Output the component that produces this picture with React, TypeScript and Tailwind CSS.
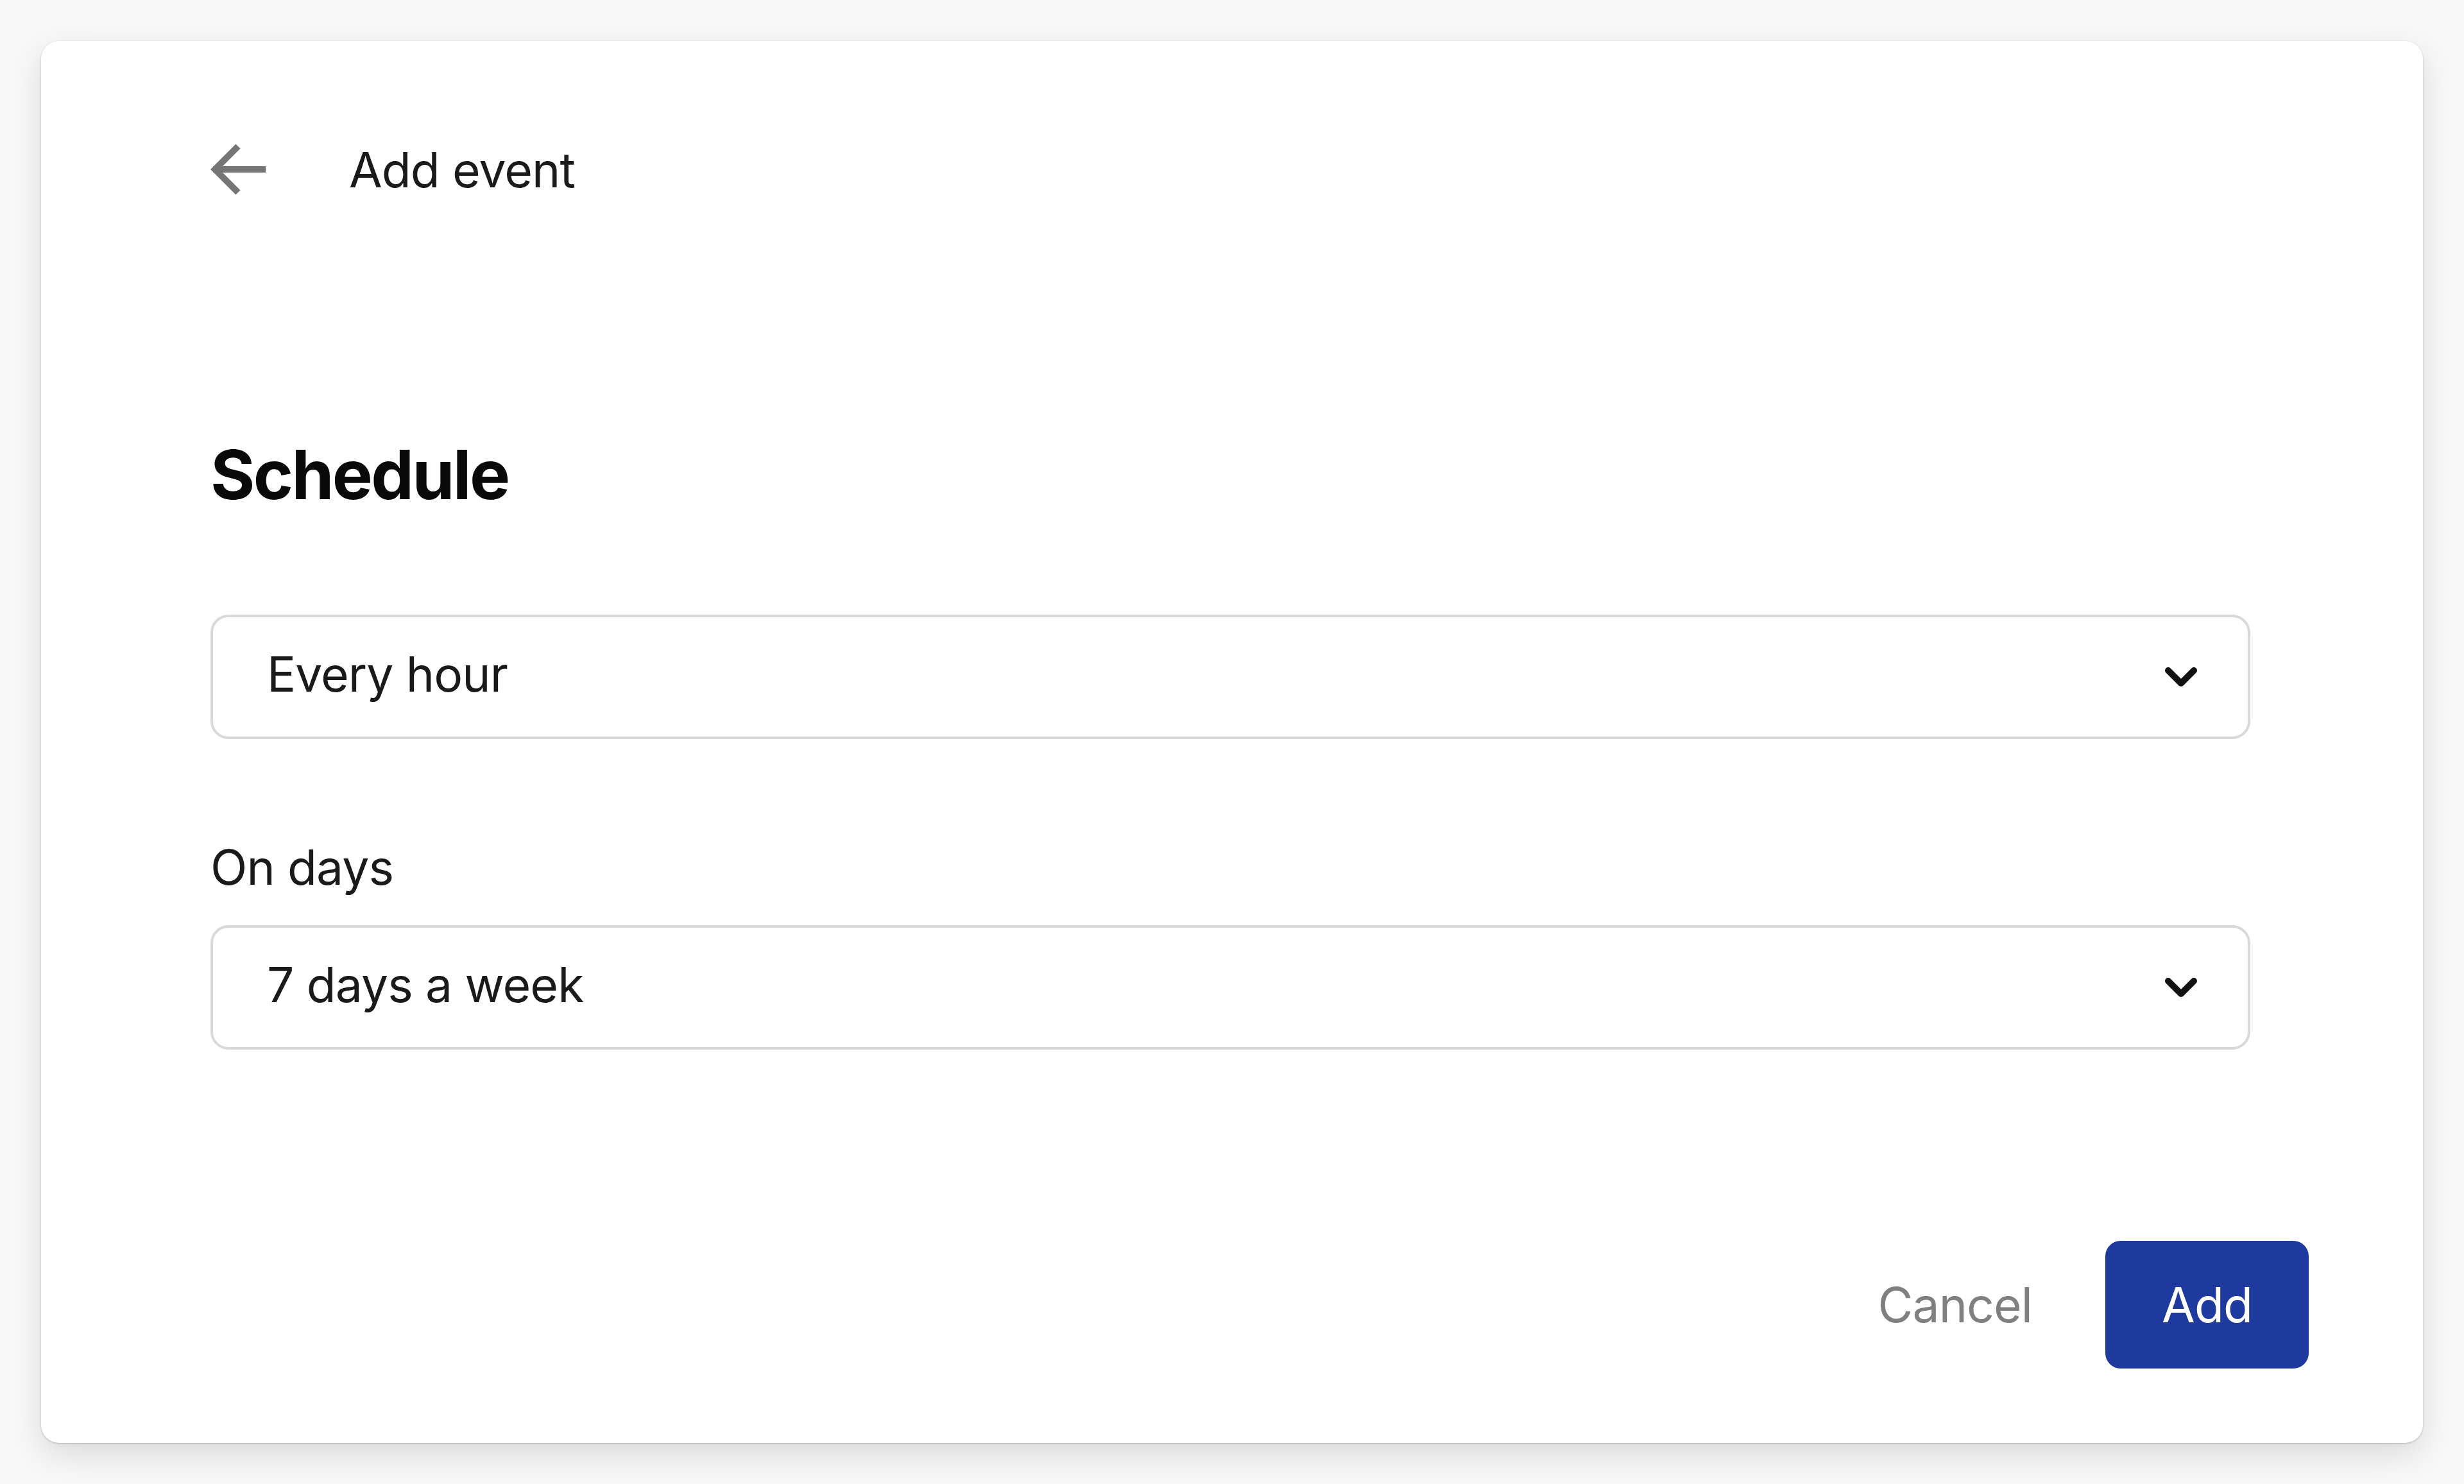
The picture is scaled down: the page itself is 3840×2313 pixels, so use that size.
import { ChevronDown } from "lucide-react";

const font = { fontFamily: "Inter, 'Noto Sans', sans-serif" };

function BackArrow() {
    return (
        <svg width="88" height="80" viewBox="0 0 88 80" fill="none" className="shrink-0">
            <path d="M4 40 H86" stroke="#757575" strokeWidth="10" />
            <path d="M43 4 L7 40 L43 76" stroke="#757575" strokeWidth="10" strokeLinejoin="miter" />
        </svg>
    );
}

function Select({ value }: { value: string }) {
    return (
        <div className="flex h-[194px] w-full items-center justify-between rounded-[28px] border-4 border-[#d9d9d9] bg-white pl-[84px] pr-[64px]">
            <span className="mb-[10px] text-[75px] leading-[95px] tracking-[-0.012em] text-[#1a1a1a]">{value}</span>
            <ChevronDown size={80} strokeWidth={3} color="#111111" />
        </div>
    );
}

export default function App() {
    return (
        <div className="flex h-screen bg-[#f8f8f8] p-16" style={font}>
            <div className="flex flex-1 flex-col rounded-[28px] bg-white shadow-[0_1px_3px_rgba(0,0,0,0.22),0_18px_50px_rgba(0,0,0,0.12)]">
                {/* header */}
                <div className="mt-[150px] flex h-[100px] items-center gap-[128px] pl-[264px]">
                    <BackArrow />
                    <span className="text-[75px] leading-[95px] tracking-[-0.012em] text-[#1a1a1a]">Add event</span>
                </div>

                {/* form */}
                <div className="flex flex-col pl-[264px] pr-[269px]">
                    <h1 className="mt-[361px] text-[106px] font-bold leading-[130px] tracking-[-0.025em] text-[#0a0a0a]">Schedule</h1>
                    <div className="mt-[153px]">
                        <Select value="Every hour" />
                    </div>
                    <label className="mt-[152px] text-[75px] leading-[95px] tracking-[-0.012em] text-[#1a1a1a]">On days</label>
                    <div className="mt-[43px]">
                        <Select value="7 days a week" />
                    </div>
                </div>

                {/* footer */}
                <div className="flex flex-1 items-end justify-end pb-[116px] pr-[178px]">
                    <div className="flex items-center gap-[114px]">
                        <button className="text-[75px] leading-[95px] tracking-[-0.012em] text-[#808080]">Cancel</button>
                        <button className="flex h-[199px] items-center rounded-[24px] bg-[#1f3a9f] px-[88px] text-[75px] leading-[95px] tracking-[-0.012em] text-white">
                            Add
                        </button>
                    </div>
                </div>
            </div>
        </div>
    );
}
